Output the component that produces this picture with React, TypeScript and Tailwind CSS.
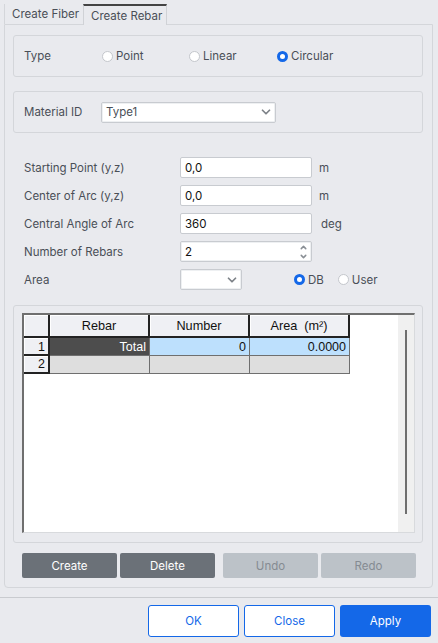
import React from "react";
import { ChevronDown, ChevronUp } from "lucide-react";

const Radio = ({ label, checked, className = "" }: { label: string; checked?: boolean; className?: string }) => (
  <label className={`flex items-center gap-[3px] ${className}`}>
    {checked ? (
      <span className="w-[11px] h-[11px] rounded-full border-[3px] border-[#1468e8] bg-white" />
    ) : (
      <span className="w-[11px] h-[11px] rounded-full border border-[#c4c7cc] bg-white" />
    )}
    <span>{label}</span>
  </label>
);

const Select = ({ value, width }: { value: string; width: string }) => (
  <div className={`${width} h-[21px] bg-white border border-[#c8cbd0] rounded-[2px] flex items-center justify-between pl-1 pr-[2px] shadow-[inset_0_0_0_1px_#eef0f2]`}>
    <span>{value}</span>
    <ChevronDown size={14} strokeWidth={3} className="text-[#7d8288]" />
  </div>
);

const Field = ({ label, value, unit }: { label: string; value: string; unit: string }) => (
  <div className="flex items-center h-[21px]">
    <span className="w-[156px]">{label}</span>
    <div className="w-[132px] h-[21px] bg-white border border-[#c8cbd0] rounded-[2px] flex items-center pl-1 text-[#111]">{value}</div>
    <span className={unit === "deg" ? "ml-[9px]" : "ml-[7px]"}>{unit}</span>
  </div>
);

const headCell = "bg-[#eff0f4] border-r-2 border-b-2 border-r-[#222] border-b-[#222] shadow-[inset_1px_1px_0_#fff]";
const bodyCell = "w-[100px] border-r border-b border-[#6f6f6f]";

export default function App() {
  return (
    <div className="w-[438px] h-[643px] bg-[#e9eaee] text-[#4a4f57] text-[11.5px] leading-[18px] overflow-hidden flex flex-col font-['Inter','Noto_Sans',sans-serif]">
      <div className="flex pl-[4px] pt-[4px] h-[24px] relative z-10 whitespace-nowrap">
        <div className="w-[79px] h-[20px] pl-[7px] leading-[20px] border-l border-[#d4d6da]">Create Fiber</div>
        <div className="w-[84px] h-[21px] pl-[7px] leading-[21px] border-t-2 border-t-[#444] border-x border-x-[#d0d2d6] bg-[#e9eaee]">Create Rebar</div>
      </div>
      <div className="ml-[4px] mr-[5px] h-[564px] border border-[#d4d6da] rounded-b-[4px] pl-[8px] pr-[9px] pt-[10px] flex flex-col">
        <div className="h-[42px] border border-[#d4d6da] rounded-[3px] flex items-center pl-[10px] shrink-0">
          <span className="w-[78px]">Type</span>
          <Radio label="Point" className="w-[87px]" />
          <Radio label="Linear" className="w-[88px]" />
          <Radio label="Circular" checked />
        </div>
        <div className="h-[42px] mt-[14px] border border-[#d4d6da] rounded-[3px] flex items-center pl-[10px] shrink-0">
          <span className="w-[77px]">Material ID</span>
          <Select value="Type1" width="w-[175px]" />
        </div>
        <div className="mt-[24px] pl-[11px] flex flex-col gap-[7px] shrink-0">
          <Field label="Starting Point (y,z)" value="0,0" unit="m" />
          <Field label="Center of Arc (y,z)" value="0,0" unit="m" />
          <Field label="Central Angle of Arc" value="360" unit="deg" />
          <div className="flex items-center h-[21px]">
            <span className="w-[156px]">Number of Rebars</span>
            <div className="w-[132px] h-[21px] bg-white border border-[#c8cbd0] rounded-[2px] flex items-center justify-between pl-1 text-[#111] shadow-[inset_0_0_0_1px_#eef0f2]">
              <span>2</span>
              <div className="flex flex-col text-[#8a8f95] pr-[3px]">
                <ChevronUp size={9} strokeWidth={4} />
                <ChevronDown size={9} strokeWidth={4} />
              </div>
            </div>
          </div>
          <div className="flex items-center h-[21px]">
            <span className="w-[156px]">Area</span>
            <Select value="" width="w-[62px]" />
            <Radio label="DB" checked className="ml-[52px]" />
            <Radio label="User" className="ml-[14px]" />
          </div>
        </div>
        <div className="mt-[15px] h-[238px] border border-[#d4d6da] rounded-[3px] pl-[8px] pr-[7px] pt-[7px] shrink-0">
          <div className="h-[220px] bg-white border-t-2 border-l-2 border-t-[#6f6f6f] border-l-[#6f6f6f] border-r border-b border-r-[#d8dadd] border-b-[#d8dadd] flex text-[#111] text-[12.5px] font-['Liberation_Sans',sans-serif]">
            <div className="flex-1 min-w-0">
              <div className="flex h-[23px] text-[12.7px]">
                <div className={`w-[26px] ${headCell}`} />
                <div className={`w-[100px] flex items-center justify-center ${headCell}`}>Rebar</div>
                <div className={`w-[100px] flex items-center justify-center ${headCell}`}>Number</div>
                <div className={`w-[100px] flex items-center justify-center ${headCell}`}>Area&nbsp;&nbsp;(m²)</div>
              </div>
              <div className="flex h-[18px]">
                <div className={`w-[26px] text-right pr-[3px] leading-[18px] ${headCell}`}>1</div>
                <div className={`${bodyCell} bg-[#4d4d4d] text-white text-right pr-[3px] leading-[18px]`}>Total</div>
                <div className={`${bodyCell} bg-[#bde0fd] text-right pr-[3px] leading-[18px]`}>0</div>
                <div className={`${bodyCell} bg-[#bde0fd] text-right pr-[3px] leading-[18px]`}>0.0000</div>
              </div>
              <div className="flex h-[18px]">
                <div className={`w-[26px] text-right pr-[3px] leading-[16px] ${headCell}`}>2</div>
                <div className={`${bodyCell} bg-[#dedede]`} />
                <div className={`${bodyCell} bg-[#dedede]`} />
                <div className={`${bodyCell} bg-[#dedede]`} />
              </div>
            </div>
            <div className="w-[16px] bg-[#f0f0f0] flex justify-center pt-[15px] pb-[18px]">
              <div className="w-[2px] bg-[#6f6f6f]" />
            </div>
          </div>
        </div>
        <div className="flex mt-[10px] pl-[9px] shrink-0 text-center">
          <button className="w-[95px] h-[25px] bg-[#6b7178] text-white rounded-[2px]">Create</button>
          <button className="w-[95px] h-[25px] ml-[3px] bg-[#6b7178] text-white rounded-[2px]">Delete</button>
          <button className="w-[95px] h-[25px] ml-[8px] bg-[#bcc2c8] text-[#858b92] rounded-[2px]">Undo</button>
          <button className="w-[95px] h-[25px] ml-[3px] bg-[#bcc2c8] text-[#858b92] rounded-[2px]">Redo</button>
        </div>
      </div>
      <div className="mt-[9px] border-t border-[#c9cbcf] pt-[7px] pr-[7px] flex justify-end gap-[5px]">
        <button className="w-[91px] h-[32px] bg-white border border-[#1468e8] text-[#1468e8] rounded-[3px]">OK</button>
        <button className="w-[91px] h-[32px] bg-white border border-[#1468e8] text-[#1468e8] rounded-[3px]">Close</button>
        <button className="w-[91px] h-[32px] bg-[#1468e8] text-white rounded-[3px]">Apply</button>
      </div>
    </div>
  );
}
